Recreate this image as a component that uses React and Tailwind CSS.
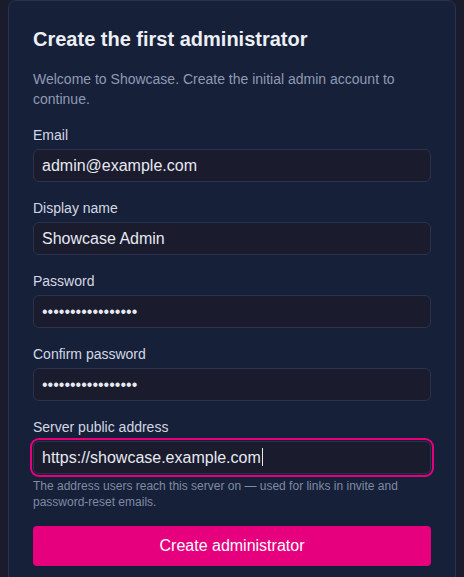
import React from "react";

function Field({ label, value, type = "text", focused = false, children }) {
  return (
    <div className="flex flex-col">
      <label className="mb-1 text-sm leading-5 text-[#d3d8e4]">{label}</label>
      <div
        className={
          "flex h-[33px] items-center rounded-md border border-[#2b3350] bg-[#1a1b2d] px-2 " +
          (focused ? "ring-2 ring-[#e6007e] ring-offset-1 ring-offset-[#181d31]" : "")
        }
      >
        <span className="text-base text-[#e6e9f1]">
          {value}
          {focused && <span className="ml-[1px] inline-block h-[18px] w-[1px] translate-y-[3px] bg-[#e6e9f1]" />}
        </span>
      </div>
      {children}
    </div>
  );
}

export default function App() {
  return (
    <div
      className="min-h-[577px] overflow-hidden bg-[#1a1b2d] px-2"
      style={{ fontFamily: '"Liberation Sans", Arial, sans-serif' }}
    >
      <div className="h-[600px] rounded-t-lg border border-[#2a3250] bg-[#172039] p-6">
        <h1 className="text-xl font-bold leading-7 text-[#eceff5]">Create the first administrator</h1>
        <p className="mt-4 text-sm leading-5 text-[#8e9ab4]">
          Welcome to Showcase. Create the initial admin account to continue.
        </p>
        <div className="mt-4 flex flex-col gap-4">
          <Field label="Email" value="admin@example.com" />
          <Field label="Display name" value="Showcase Admin" />
          <Field label="Password" type="password" value="•••••••••••••••••" />
          <Field label="Confirm password" type="password" value="•••••••••••••••••" />
          <Field label="Server public address" value="https://showcase.example.com" focused>
            <p className="mt-1 text-xs leading-4 text-[#7f8aa3]">
              The address users reach this server on — used for links in invite and password-reset emails.
            </p>
          </Field>
          <button className="h-[40px] w-full rounded bg-[#e6007e] text-base text-white">
            Create administrator
          </button>
        </div>
      </div>
    </div>
  );
}
